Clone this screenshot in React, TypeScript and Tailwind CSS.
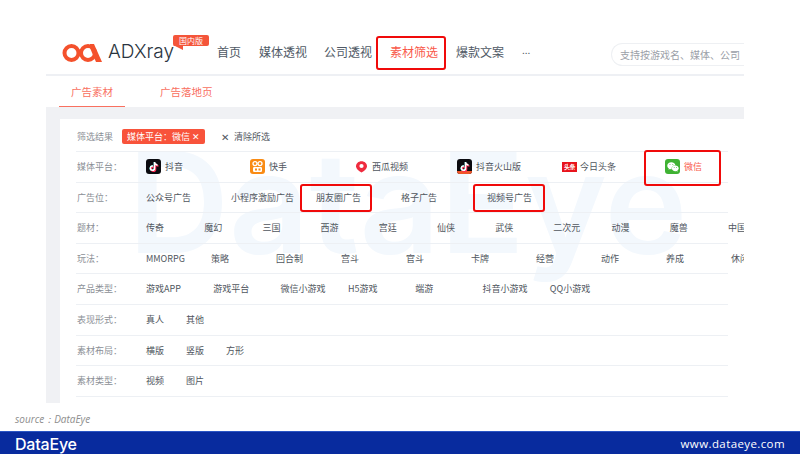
import React from 'react';
import { FaTiktok, FaWeixin } from 'react-icons/fa';

const cjk = { fontFamily: '"Noto Sans CJK SC", sans-serif' };

const Highlight = ({ className }: { className: string }) => (
  <span className={`absolute border-2 border-[#f00a0a] rounded-[3px] pointer-events-none ${className}`} />
);

const TikTok = ({ volcano }: { volcano?: boolean }) => (
  <span className="relative w-[15px] h-[15px] rounded-[3px] bg-[#0b0b10] flex items-center justify-center overflow-hidden">
    {volcano && <span className="absolute left-0 right-0 bottom-0 h-[3px] bg-[#f0562a]" />}
    <FaTiktok className="absolute text-[#25f4ee] w-[9px] h-[9px] left-[2.5px] top-[3px]" />
    <FaTiktok className="absolute text-[#fe2c55] w-[9px] h-[9px] left-[3.5px] top-[3.5px]" />
    <FaTiktok className="absolute text-white w-[9px] h-[9px] left-[3px] top-[3px]" />
  </span>
);

const Kuaishou = () => (
  <svg width="15" height="15" viewBox="0 0 15 15">
    <rect width="15" height="15" rx="3" fill="#f98b14" />
    <circle cx="5" cy="4.6" r="2" fill="none" stroke="#fff" strokeWidth="1.3" />
    <circle cx="10" cy="4.6" r="2" fill="none" stroke="#fff" strokeWidth="1.3" />
    <rect x="3" y="8" width="9" height="5" rx="1.2" fill="#fff" />
    <rect x="5" y="9.5" width="2" height="2" fill="#f98b14" />
    <rect x="8.5" y="9.5" width="2" height="2" fill="#f98b14" />
  </svg>
);

const Xigua = () => (
  <svg width="13" height="13" viewBox="0 0 13 13">
    <path d="M6.5 1.2C9.6 1.2 12 3.4 12 6.3c0 2.7-2.6 4.5-5.5 6.2C3.6 10.8 1 9 1 6.3 1 3.4 3.4 1.2 6.5 1.2Z" fill="#ef2b3e" />
    <circle cx="6.5" cy="6" r="2.1" fill="#fff" />
  </svg>
);

const Toutiao = () => (
  <span className="w-[15px] h-[10px] bg-[#e8141d] text-white text-[6px] leading-[10px] font-bold text-center tracking-[-0.5px] overflow-hidden" style={cjk}>
    头条
  </span>
);

const Wechat = () => (
  <span className="w-[15px] h-[15px] rounded-[3px] bg-[#3fb233] flex items-center justify-center">
    <FaWeixin className="text-white w-[12px] h-[12px]" />
  </span>
);

const Row = ({ label, children }: { label: string; children: React.ReactNode }) => (
  <div className="relative flex items-center border-b border-[#edf0f4] h-[30.6px] shrink-0">
    <span className="w-[70px] pl-[1px] shrink-0 text-[9px] text-[#8b8f96]">{label}</span>
    <div className="flex items-center min-w-0">{children}</div>
  </div>
);

const Items = ({ items, width }: { items: string[]; width: string }) => (
  <>
    {items.map((t, i) => (
      <span key={i} className={`${width} shrink-0 text-[9px] text-[#50565e] whitespace-nowrap`}>
        {t}
      </span>
    ))}
  </>
);

export default function App() {
  return (
    <div className="w-[800px] h-[454px] bg-white flex flex-col overflow-hidden" style={cjk}>
      <div className="h-[431px] shrink-0 pt-[34px] pl-[46px] w-[744px] flex flex-col">
        {/* Top nav */}
        <div className="h-[42px] shrink-0 border-b-2 border-[#eef0f4] flex items-start">
          <div className="relative w-[171px] shrink-0 flex items-center h-[36px]">
            <svg width="42" height="20" viewBox="0 0 42 20" className="ml-[16px] mt-[1px]">
              <circle cx="9.5" cy="10" r="7" fill="none" stroke="#f4512c" strokeWidth="4" />
              <circle cx="26" cy="10" r="7" fill="none" stroke="#f4512c" strokeWidth="4" />
              <path d="M28 1h4l8 18h-6L28 5Z" fill="#f4512c" />
            </svg>
            <span className="ml-[4px] text-[19px] text-[#2a3440] font-light" style={{ fontFamily: 'Inter, sans-serif' }}>
              ADXray
            </span>
            <span className="absolute left-[127px] top-[1px] w-[36px] h-[11px] bg-[#f4553a] rounded-[2px] text-white text-[8px] leading-[11px] text-center">
              国内版
            </span>
            <span className="absolute left-[127px] top-[11px] w-0 h-0 border-t-[5px] border-t-[#f4553a] border-l-[10px] border-l-transparent" />
          </div>
          <nav className="flex items-center h-[36px] text-[12px] text-[#4f5965]">
            <span className="w-[42px]">首页</span>
            <span className="w-[65px]">媒体透视</span>
            <span className="w-[66px]">公司透视</span>
            <span className="relative w-[66px] text-[#f9584a]">
              素材筛选
              <Highlight className="left-[-14px] right-[10px] top-[-7px] bottom-[-9px]" />
            </span>
            <span className="w-[66px]">爆款文案</span>
            <span className="w-[89px] text-[10px] leading-none pb-[4px]">...</span>
          </nav>
          <div className="w-[133px] h-[23px] mt-[9px] border border-[#eef0f3] border-r-0 rounded-l-full pl-[8px] text-[10px] leading-[22px] text-[#9ba0a8] whitespace-nowrap overflow-hidden">
            支持按游戏名、媒体、公司
          </div>
        </div>

        {/* Tabs */}
        <div className="h-[31px] shrink-0 flex text-[10.5px] text-[#f9705f]">
          <span className="w-[66px] ml-[13px] h-[31px] border-b border-[#f9705f] text-center leading-[32px]">广告素材</span>
          <span className="ml-[35px] leading-[32px]">广告落地页</span>
        </div>

        {/* Gray body */}
        <div className="h-[296px] shrink-0 bg-[#f0f1f4] pt-[12px] pl-[14px]">
          <div className="relative h-[284px] bg-white px-[16px] overflow-hidden">
            <span
              className="absolute left-[68px] top-[-2px] text-[140px] leading-[170px] font-semibold text-[#f3f8fd] whitespace-nowrap"
              style={{ fontFamily: 'Inter, sans-serif' }}
            >
              DataEye
            </span>

            <div className="relative flex flex-col">
              <div className="flex items-center border-b border-[#edf0f4] h-[33px] pt-[3px] shrink-0">
                <span className="w-[46px] pl-[1px] text-[9px] text-[#8b8f96]">筛选结果</span>
                <span className="w-[83px] h-[15px] rounded-[2px] bg-[#f8533b] text-white text-[9px] leading-[15px] text-center whitespace-nowrap">
                  媒体平台：微信 ✕
                </span>
                <span className="ml-[16px] flex items-center gap-[5px] text-[9px] text-[#50565e]">
                  <span className="w-[8px] text-[10px]">✕</span>清除所选
                </span>
              </div>

              <Row label="媒体平台：">
                <span className="w-[104px] shrink-0 flex items-center gap-[4px] text-[9px] text-[#50565e]"><TikTok />抖音</span>
                <span className="w-[105px] shrink-0 flex items-center gap-[4px] text-[9px] text-[#50565e]"><Kuaishou />快手</span>
                <span className="w-[102px] shrink-0 flex items-center gap-[4px] text-[9px] text-[#50565e]"><Xigua />西瓜视频</span>
                <span className="w-[105px] shrink-0 flex items-center gap-[4px] text-[9px] text-[#50565e]"><TikTok volcano />抖音火山版</span>
                <span className="w-[103px] shrink-0 flex items-center gap-[3px] text-[9px] text-[#50565e]"><Toutiao />今日头条</span>
                <span className="relative w-[60px] shrink-0 flex items-center gap-[4px] text-[9px] text-[#f9584a]">
                  <Wechat />微信
                  <Highlight className="left-[-21px] w-[77px] top-[-9px] h-[36px]" />
                </span>
              </Row>

              <Row label="广告位：">
                <span className="w-[85px] shrink-0 text-[9px] text-[#50565e]">公众号广告</span>
                <span className="w-[85px] shrink-0 text-[9px] text-[#50565e]">小程序激励广告</span>
                <span className="relative w-[85px] shrink-0 text-[9px] text-[#50565e]">
                  朋友圈广告
                  <Highlight className="left-[-16px] w-[72px] top-[-7px] h-[28px]" />
                </span>
                <span className="w-[86px] shrink-0 text-[9px] text-[#50565e]">格子广告</span>
                <span className="relative w-[85px] shrink-0 text-[9px] text-[#50565e]">
                  视频号广告
                  <Highlight className="left-[-14px] w-[72px] top-[-7px] h-[28px]" />
                </span>
              </Row>

              <Row label="题材：">
                <Items width="w-[58.2px]" items={['传奇', '魔幻', '三国', '西游', '宫廷', '仙侠', '武侠', '二次元', '动漫', '魔兽', '中国风']} />
              </Row>
              <Row label="玩法：">
                <Items width="w-[65px]" items={['MMORPG', '策略', '回合制', '宫斗', '官斗', '卡牌', '经营', '动作', '养成', '休闲']} />
              </Row>
              <Row label="产品类型：">
                <Items width="w-[67.3px]" items={['游戏APP', '游戏平台', '微信小游戏', 'H5游戏', '端游', '抖音小游戏', 'QQ小游戏']} />
              </Row>
              <Row label="表现形式：">
                <Items width="w-[40px]" items={['真人', '其他']} />
              </Row>
              <Row label="素材布局：">
                <Items width="w-[40px]" items={['横版', '竖版', '方形']} />
              </Row>
              <Row label="素材类型：">
                <Items width="w-[40px]" items={['视频', '图片']} />
              </Row>
            </div>
          </div>
        </div>
      </div>

      {/* Source line sits over the bottom of the page area */}
      <div className="relative flex-1 bg-[#082b9e] border-t border-[#2a55c4] flex items-center justify-between pl-[15px] pr-[15px]">
        <span className="absolute left-[15px] top-[-20px] text-[10px] italic text-[#8d8d8d]" style={{ fontFamily: '"Open Sans", sans-serif' }}>
          source：DataEye
        </span>
        <span className="text-white text-[16px] font-medium tracking-[-0.2px]" style={{ fontFamily: 'Inter, sans-serif' }}>DataEye</span>
        <span className="text-white text-[11.5px] tracking-[0.4px]" style={{ fontFamily: '"Open Sans", sans-serif' }}>www.dataeye.com</span>
      </div>
    </div>
  );
}
